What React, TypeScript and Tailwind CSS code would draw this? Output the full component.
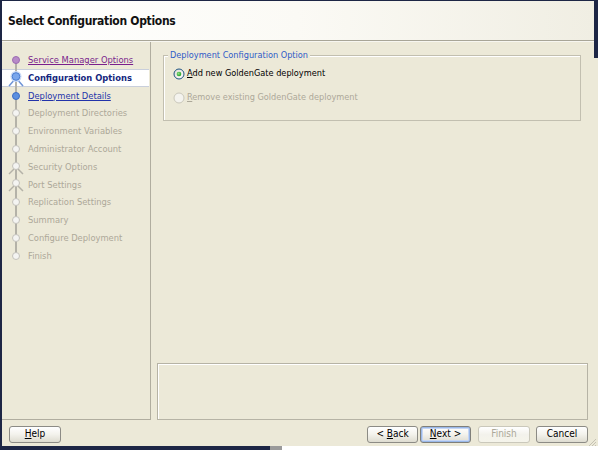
import React from "react";

type Kind = "visited" | "current" | "next" | "off" | "branch";

const steps: { label: string; kind: Kind }[] = [
  { label: "Service Manager Options", kind: "visited" },
  { label: "Configuration Options", kind: "current" },
  { label: "Deployment Details", kind: "next" },
  { label: "Deployment Directories", kind: "off" },
  { label: "Environment Variables", kind: "off" },
  { label: "Administrator Account", kind: "off" },
  { label: "Security Options", kind: "branch" },
  { label: "Port Settings", kind: "branch" },
  { label: "Replication Settings", kind: "off" },
  { label: "Summary", kind: "off" },
  { label: "Configure Deployment", kind: "off" },
  { label: "Finish", kind: "off" },
];

function StepIcon({ kind, first, last }: { kind: Kind; first: boolean; last: boolean }) {
  return (
    <svg width="20" height="18" viewBox="0 0 20 18" className="shrink-0">
      <line x1="10" y1={first ? 9 : 0} x2="10" y2={last ? 9 : 18} stroke="#b4b2a8" strokeWidth="2" />
      {kind === "visited" && (
        <circle cx="10" cy="9" r="3.5" fill="#b78bc8" stroke="#9c6cb2" strokeWidth="1" />
      )}
      {kind === "next" && (
        <circle cx="10" cy="9" r="3.5" fill="#5b8fe0" stroke="#3c6cc4" strokeWidth="1" />
      )}
      {kind === "off" && (
        <circle cx="10" cy="9" r="3.5" fill="#f4f4f2" stroke="#c4c2bb" strokeWidth="1" />
      )}
      {kind === "branch" && (
        <>
          <line x1="10" y1="9" x2="3" y2="16" stroke="#b4b2a8" strokeWidth="1.5" />
          <line x1="10" y1="9" x2="17" y2="16" stroke="#b4b2a8" strokeWidth="1.5" />
          <circle cx="10" cy="8" r="3.5" fill="#f4f4f2" stroke="#c4c2bb" strokeWidth="1" />
        </>
      )}
      {kind === "current" && (
        <>
          <line x1="10" y1="9" x2="3" y2="17" stroke="#6d93d6" strokeWidth="1.5" />
          <line x1="10" y1="9" x2="17" y2="17" stroke="#6d93d6" strokeWidth="1.5" />
          <circle cx="10" cy="7.5" r="5.5" fill="#c8d8f4" />
          <circle cx="10" cy="7.5" r="3.8" fill="#7aa6ec" stroke="#4b7dd2" strokeWidth="1" />
        </>
      )}
    </svg>
  );
}

function Radio({ checked, disabled }: { checked?: boolean; disabled?: boolean }) {
  return (
    <svg width="12" height="12" viewBox="0 0 12 12" className="shrink-0">
      <defs>
        <linearGradient id="rg" x1="0" y1="0" x2="1" y2="1">
          <stop offset="0" stopColor="#dcdcd4" />
          <stop offset="1" stopColor="#ffffff" />
        </linearGradient>
        <radialGradient id="dot" cx="0.4" cy="0.4" r="0.6">
          <stop offset="0" stopColor="#8fe08a" />
          <stop offset="1" stopColor="#21a121" />
        </radialGradient>
      </defs>
      <circle cx="6" cy="6" r="5" fill={disabled ? "#f4f3ee" : "url(#rg)"} stroke={disabled ? "#cac8bb" : "#1c5180"} strokeWidth="1" />
      {checked && <circle cx="6" cy="6" r="2.3" fill="url(#dot)" />}
    </svg>
  );
}

function Btn({ children, w, variant }: { children: React.ReactNode; w: string; variant?: "default" | "disabled" }) {
  const base =
    "h-[17px] rounded-[3px] border flex items-center justify-center text-[10px] leading-none bg-gradient-to-b from-[#ffffff] via-[#f3f2ec] to-[#dedcd0]";
  if (variant === "disabled") {
    return (
      <div className={`${w} ${base} border-[#cac8bb] text-[#aca899] from-[#f5f4ea] to-[#f5f4ea]`}>
        <span className="whitespace-pre">{children}</span>
      </div>
    );
  }
  if (variant === "default") {
    return (
      <div className={`${w} ${base} border-[#7f7f7a] text-black shadow-[inset_0_0_0_1px_#9ab8e8,inset_0_0_0_2px_#c6d6f4]`}>
        <span className="whitespace-pre">{children}</span>
      </div>
    );
  }
  return (
    <div className={`${w} ${base} border-[#8c8b85] text-black`}>
      <span className="whitespace-pre">{children}</span>
    </div>
  );
}

export default function App() {
  return (
    <div
      className="w-[598px] h-[450px] bg-white relative overflow-hidden flex flex-col"
      style={{ fontFamily: '"DejaVu Sans Condensed", "DejaVu Sans", sans-serif' }}
    >
      <div className="h-[446px] flex">
        <div className="w-[2px] bg-[#1d2645]" />
        <div className="flex-1 flex flex-col bg-[#ece9d8] border-t border-[#1d2645]">
          <div className="h-[39px] bg-gradient-to-r from-[#ffffff] via-[#fbfaf5] to-[#f0eee3] flex items-center pl-[6px]">
            <span className="text-[12px] tracking-[-0.3px] font-bold text-[#111]">Select Configuration Options</span>
          </div>
          <div className="h-[2px] border-t border-[#a8a597] bg-[#f7f6f0]" />
          <div className="flex-1 flex">
            <div className="w-[149px] border-r border-b border-[#b0ad9f] pt-[9px] flex flex-col">
              {steps.map((s, i) => {
                const cur = s.kind === "current";
                let text = "text-[#aca899]";
                if (s.kind === "visited") text = "text-[#7a1f8c] underline";
                if (s.kind === "next") text = "text-[#2233aa] underline";
                if (cur) text = "text-[#14267e] font-bold";
                return (
                  <div
                    key={s.label}
                    className={`h-[17.8px] flex items-center pl-[4px] ${cur ? "bg-white border-y border-[#c9cfdc] mr-[1px]" : ""}`}
                  >
                    <StepIcon kind={s.kind} first={i === 0} last={i === steps.length - 1} />
                    <span className={`ml-[2px] text-[9.3px] whitespace-nowrap ${text}`}>{s.label}</span>
                  </div>
                );
              })}
            </div>
            <div className="flex-1 flex flex-col">
              <div className="ml-[12px] mr-[13px] mt-[13px] h-[66px] border border-[#c2bfb0] shadow-[inset_1px_1px_0_#fff] relative pt-[10px] pl-[9px]">
                <span className="absolute left-[4px] top-[-5px] bg-[#ece9d8] px-[2px] text-[9.1px] text-[#2f5bc7] leading-none">
                  Deployment Configuration Option
                </span>
                <div className="flex items-center gap-[2px] h-[16px]">
                  <Radio checked />
                  <span className="text-[9.1px] text-black"><span className="underline">A</span>dd new GoldenGate deployment</span>
                </div>
                <div className="flex items-center gap-[2px] h-[16px] mt-[8px]">
                  <Radio disabled />
                  <span className="text-[9.1px] text-[#aca899]"><span className="underline">R</span>emove existing GoldenGate deployment</span>
                </div>
              </div>
              <div className="flex-1" />
              <div className="ml-[6px] mr-[6px] h-[57px] border border-[#b6b3a5] shadow-[inset_1px_1px_0_#fff]" />
            </div>
          </div>
          <div className="h-[26px] flex items-center pl-[7px] pr-[6px] pt-[2px]">
            <Btn w="w-[52px]"><span className="underline">H</span>elp</Btn>
            <div className="flex-1" />
            <Btn w="w-[51px]">{"< "}<span className="underline">B</span>ack</Btn>
            <div className="w-[2px]" />
            <Btn w="w-[51px]" variant="default"><span className="underline">N</span>{"ext >"}</Btn>
            <div className="w-[7px]" />
            <Btn w="w-[52px]" variant="disabled">Finish</Btn>
            <div className="w-[6px]" />
            <Btn w="w-[52px]">Cancel</Btn>
          </div>
        </div>
        <div className="w-[4px] flex flex-col">
          <div className="h-[58px] bg-[#1d2645]" />
          <div className="flex-1 bg-[#ece9d8]" />
        </div>
      </div>
      <div className="h-[4px] flex">
        <div className="w-[270px] bg-[#1d2645]" />
        <div className="w-[12px] bg-[#9a9a9a]" />
        <div className="flex-1 bg-white" />
      </div>
      <svg className="absolute right-[1px] bottom-[3px]" width="10" height="10" viewBox="0 0 10 10">
        <line x1="9" y1="2" x2="2" y2="9" stroke="#c4c1b3" />
        <line x1="9" y1="5" x2="5" y2="9" stroke="#c4c1b3" />
        <line x1="9" y1="8" x2="8" y2="9" stroke="#c4c1b3" />
      </svg>
    </div>
  );
}
